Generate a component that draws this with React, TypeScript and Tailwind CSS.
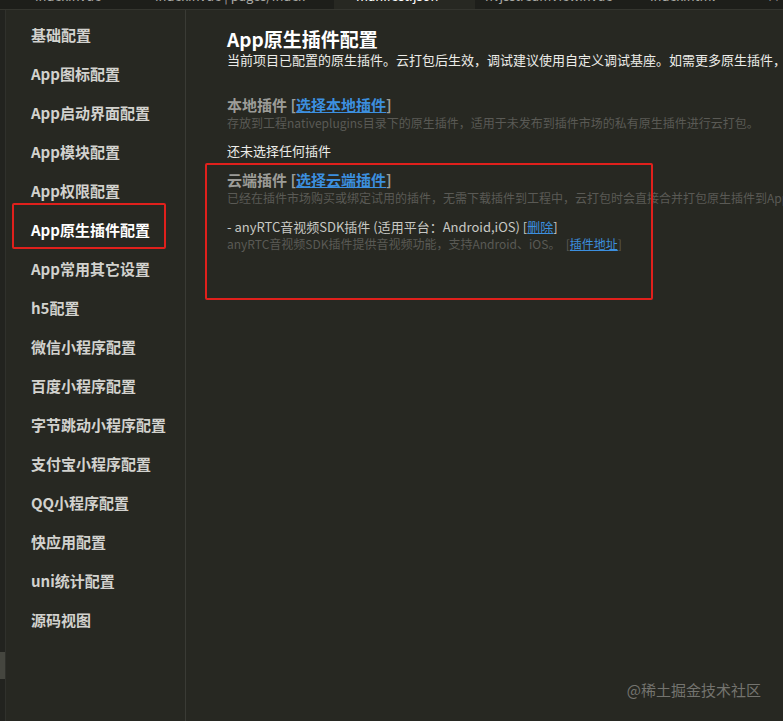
import React from "react";

const FONT = { fontFamily: '"Noto Sans CJK SC", "Noto Sans", sans-serif' } as const;

const items = [
  "基础配置",
  "App图标配置",
  "App启动界面配置",
  "App模块配置",
  "App权限配置",
  "App原生插件配置",
  "App常用其它设置",
  "h5配置",
  "微信小程序配置",
  "百度小程序配置",
  "字节跳动小程序配置",
  "支付宝小程序配置",
  "QQ小程序配置",
  "快应用配置",
  "uni统计配置",
  "源码视图",
];

function Tab({ label, x, active }: { label: string; x: number; active?: boolean }) {
  return (
    <span
      className={`absolute top-[-12px] text-[13px] leading-[16px] whitespace-nowrap ${active ? "text-white" : "text-[#a8a8a4]"}`}
      style={{ left: x }}
    >
      {label}
    </span>
  );
}

export default function App() {
  return (
    <div
      className="relative w-[783px] h-[721px] overflow-hidden bg-[#272822] flex flex-col"
      style={FONT}
    >
      {/* tab strip */}
      <div className="relative h-[10px] flex shrink-0 border-b border-[#34352f] bg-[#1d1e1a] overflow-hidden">
        <div className="w-[334px] h-full bg-[#1d1e1a]" />
        <div className="w-[141px] h-full bg-[#272822]" />
        <div className="flex-1 h-full bg-[#1d1e1a]" />
        <Tab label="index.nvue" x={35} />
        <Tab label="index.nvue | pages/index" x={155} />
        <Tab label="manifest.json" x={356} active />
        <Tab label="nvjsstreamView.nvue" x={485} />
        <Tab label="index.html" x={650} />
        <Tab label="×" x={767} />
      </div>

      <div className="flex flex-1 min-h-0">
        {/* left strip */}
        <div className="w-[6px] shrink-0 bg-[#22231f] border-r border-[#30312c] flex flex-col">
          <div className="h-[642px]" />
          <div className="h-[27px] w-[5px] bg-[#45463f]" />
        </div>

        {/* sidebar */}
        <div className="w-[180px] shrink-0 border-r border-[#3a3b35] pt-[6px] pl-[25px]">
          {items.map((it, i) => (
            <div
              key={it}
              className={`relative h-[39px] flex items-center text-[15px] font-bold whitespace-nowrap ${i === 5 ? "text-white" : "text-[#d2d2ce]"}`}
            >
              {it}
              {i === 5 && (
                <div className="absolute left-[-19px] top-[-8px] w-[154px] h-[46px] border-2 border-[#e0201c] rounded-[2px]" />
              )}
            </div>
          ))}
        </div>

        {/* content */}
        <div className="flex-1 min-w-0 overflow-hidden pl-[41px] pt-[18px] whitespace-nowrap">
          <div className="text-[19px] leading-[22px] font-bold text-white">App原生插件配置</div>
          <div className="mt-[2px] text-[13px] leading-[16px] text-[#ecece8]">
            当前项目已配置的原生插件。云打包后生效，调试建议使用自定义调试基座。如需更多原生插件，请到插件市场选择
          </div>

          <div className="mt-[27px] text-[15px] leading-[20px] font-bold text-[#9c9c98]">
            本地插件 [<span className="text-[#3c8fdf] underline">选择本地插件</span>]
          </div>
          <div className="text-[12px] leading-[16px] text-[#5a5a55]">
            存放到工程nativeplugins目录下的原生插件，适用于未发布到插件市场的私有原生插件进行云打包。
          </div>

          <div className="mt-[11px] text-[13px] leading-[18px] text-[#ecece8]">还未选择任何插件</div>

          <div className="relative mt-[10px]">
            <div className="text-[15px] leading-[20px] font-bold text-[#9c9c98]">
              云端插件 [<span className="text-[#3c8fdf] underline">选择云端插件</span>]
            </div>
            <div className="text-[12px] leading-[16px] text-[#5a5a55]">
              已经在插件市场购买或绑定试用的插件，无需下载插件到工程中，云打包时会直接合并打包原生插件到App中。
            </div>
            <div className="mt-[12px] text-[13px] leading-[18px] text-[#c8c8c4]">
              - anyRTC音视频SDK插件 (适用平台：Android,iOS) [<span className="text-[#3c8fdf] underline">删除</span>]
            </div>
            <div className="text-[12px] leading-[16px] text-[#5a5a55]">
              anyRTC音视频SDK插件提供音视频功能，支持Android、iOS。&nbsp;&nbsp;[<span className="text-[#3c8fdf] underline">插件地址</span>]
            </div>
            <div className="absolute left-[-22px] top-[-7px] w-[448px] h-[137px] border-2 border-[#e0201c] rounded-[2px] pointer-events-none" />
          </div>
        </div>
      </div>

      {/* watermark */}
      <div className="absolute right-[22px] bottom-[21px] text-[15px] leading-[20px] text-[#74746f]">
        @稀土掘金技术社区
      </div>
    </div>
  );
}
